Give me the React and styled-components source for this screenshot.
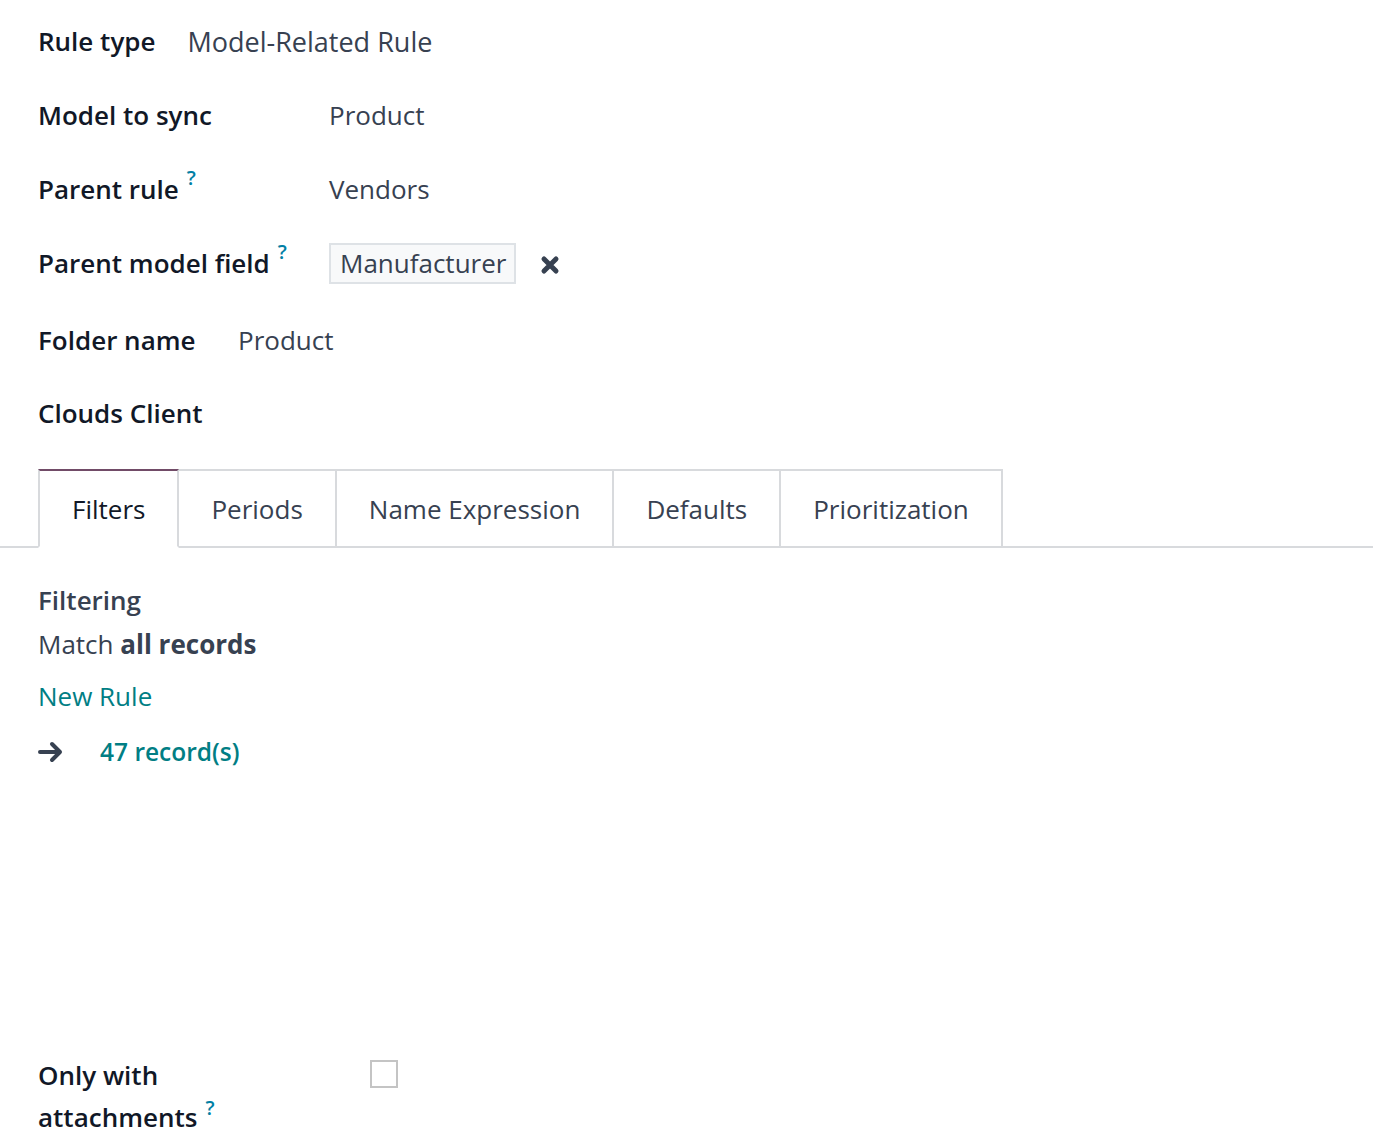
import React from 'react';
import styled, { createGlobalStyle } from 'styled-components';

const GlobalStyle = createGlobalStyle`
  body {
    margin: 0;
    background: #fff;
    font-family: "Open Sans", "Noto Sans", sans-serif;
    color: #374151;
  }
`;

const Sheet = styled.div`
  padding-top: 4px;
  min-height: 1146px;
`;

const Group = styled.div`
  display: grid;
  grid-template-columns: ${(p) => p.labelWidth || 'auto'} 1fr;
  padding: 0 38px;
  margin-top: ${(p) => p.gap || 0}px;
`;

const Label = styled.div`
  height: ${(p) => p.h || 74}px;
  display: flex;
  align-items: center;
  font-size: 26px;
  font-weight: 600;
  color: #111827;
  white-space: nowrap;
  padding-right: 32px;
`;

const Value = styled.div`
  height: ${(p) => p.h || 74}px;
  display: flex;
  align-items: center;
  font-size: ${(p) => p.size || 26}px;
  color: #374151;
  gap: 24px;
`;

const Help = styled.sup`
  font-size: 20px;
  font-weight: 600;
  color: #0180a5;
  margin-left: 8px;
  align-self: flex-start;
  margin-top: 12px;
`;

const Tag = styled.span`
  border: 2px solid #dee2e6;
  background: #f8f9fa;
  padding: 1px 8px 1px 9px;
  line-height: 35px;
`;

const RemoveBtn = styled.span`
  display: inline-flex;
  align-items: center;
  margin-top: 4px;
`;

const Notebook = styled.div`
  margin-top: 20px;
`;

const TabList = styled.div`
  display: flex;
  padding-left: 38px;
  border-bottom: 2px solid #d8dadd;
`;

const Tab = styled.div`
  height: 75px;
  display: flex;
  align-items: center;
  padding: 0 32px;
  margin-bottom: -2px;
  font-size: 26px;
  color: ${(p) => (p.active ? '#111827' : '#374151')};
  background: #fff;
  border: 2px solid #d8dadd;
  border-left-width: ${(p) => (p.first ? 2 : 0)}px;
  border-top-color: ${(p) => (p.active ? '#714b67' : '#d8dadd')};
  border-bottom-color: ${(p) => (p.active ? '#fff' : '#d8dadd')};
`;

const TabContent = styled.div`
  padding: 30px 38px 0;
`;

const SectionTitle = styled.div`
  font-size: 26px;
  font-weight: 600;
  color: #374151;
  line-height: 44px;
`;

const MatchLine = styled.div`
  font-size: 26px;
  line-height: 44px;
  color: #374151;
  b {
    font-weight: 700;
  }
`;

const LinkText = styled.a`
  display: block;
  font-size: 26px;
  line-height: 44px;
  color: #017e84;
  text-decoration: none;
  margin-top: 8px;
`;

const CountRow = styled.div`
  display: flex;
  align-items: center;
  gap: 36px;
  margin-top: 12px;
  font-size: 24.5px;
  line-height: 44px;
  color: #017e84;
  font-weight: 600;
`;

const BottomGroup = styled.div`
  display: grid;
  grid-template-columns: 332px 1fr;
  align-items: start;
  padding: 0 38px;
  margin-top: 280px;
`;

const WrapLabel = styled.div`
  font-size: 26px;
  font-weight: 600;
  color: #111827;
  line-height: 42px;
  width: 200px;
`;

const HelpInline = styled.sup`
  font-size: 20px;
  font-weight: 600;
  color: #0180a5;
  margin-left: 8px;
  position: relative;
  top: -12px;
  vertical-align: baseline;
  line-height: 0;
`;

const Checkbox = styled.div`
  width: 24px;
  height: 24px;
  border: 2px solid #c4c4c4;
  margin-top: 6px;
`;

const tabs = ['Filters', 'Periods', 'Name Expression', 'Defaults', 'Prioritization'];

const CloseIcon = () => (
  <svg width="20" height="20" viewBox="0 0 20 20">
    <path d="M4 4 L16 16 M16 4 L4 16" stroke="#374151" strokeWidth="5" strokeLinecap="round" />
  </svg>
);

const ArrowIcon = () => (
  <svg width="26" height="22" viewBox="0 0 26 22">
    <path d="M2 11 H22 M14 3 L22 11 L14 19" stroke="#374151" strokeWidth="4" fill="none" strokeLinecap="round" strokeLinejoin="round" />
  </svg>
);

export default function App() {
  return (
    <Sheet>
      <GlobalStyle />
      <Group>
        <Label>Rule type</Label>
        <Value size={27}>Model-Related Rule</Value>
      </Group>
      <Group labelWidth="291px">
        <Label>Model to sync</Label>
        <Value>Product</Value>
        <Label>Parent rule<Help>?</Help></Label>
        <Value>Vendors</Value>
        <Label>Parent model field<Help>?</Help></Label>
        <Value>
          <Tag>Manufacturer</Tag>
          <RemoveBtn><CloseIcon /></RemoveBtn>
        </Value>
      </Group>
      <Group labelWidth="200px" gap={3}>
        <Label>Folder name</Label>
        <Value>Product</Value>
        <Label h={72}>Clouds Client</Label>
        <Value h={72} />
      </Group>
      <Notebook>
        <TabList>
          {tabs.map((t, i) => (
            <Tab key={t} active={i === 0} first={i === 0}>{t}</Tab>
          ))}
        </TabList>
        <TabContent>
          <SectionTitle>Filtering</SectionTitle>
          <MatchLine>Match <b>all records</b></MatchLine>
          <LinkText href="#">New Rule</LinkText>
          <CountRow>
            <ArrowIcon />
            <span>47 record(s)</span>
          </CountRow>
        </TabContent>
      </Notebook>
      <BottomGroup>
        <WrapLabel>Only with attachments<HelpInline>?</HelpInline></WrapLabel>
        <Checkbox />
      </BottomGroup>
    </Sheet>
  );
}
